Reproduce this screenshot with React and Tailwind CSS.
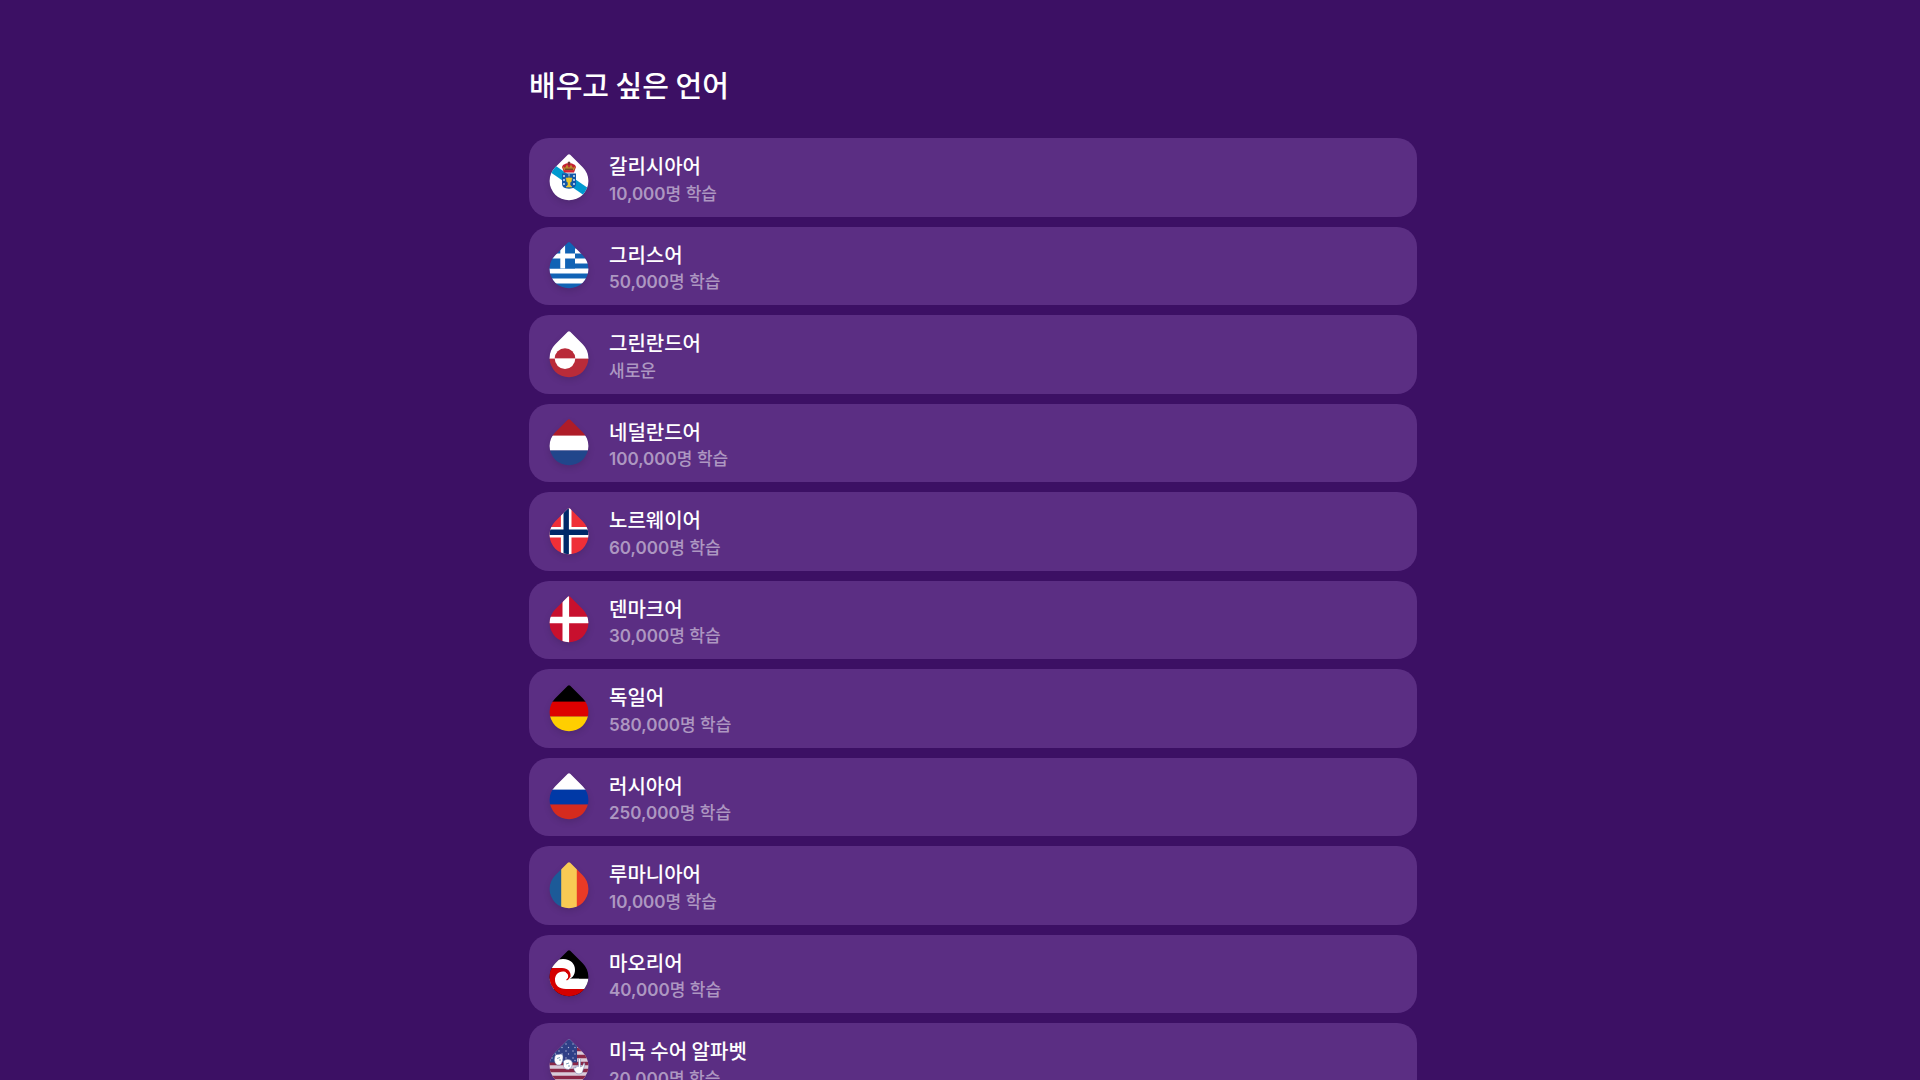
import React, { useId } from 'react';

const DROP = 'M18.8 .7Q20 -.4 21.2 .7L33.7 13.2A19.4 19.4 0 1 1 6.3 13.2Z';

const STARS = [0, 1, 2, 3, 4, 5, 6, 7, 8, 9, 10, 11];

function Galician() {
    return (
        <>
            <rect width="40" height="48" fill="#fff" />
            <path d="M-2 6L42 36V46L-2 16Z" fill="#0099cf" />
            <path d="M13 19.5H27V30Q27 34.5 20 34.7Q13 34.5 13 30Z" fill="#1257a8" />
            <path d="M14 11Q20 7 26 11L27 13L25 18.5H15L13 13Z" fill="#c41f31" />
            <path d="M13.5 12L16 14L18 10.5L20 14L22 10.5L24 14L26.5 12L25 16.5H15Z" fill="#b98a2c" />
            <path d="M16 15.2H24M20 7.5V11M18.7 8.7H21.3" stroke="#5b2a25" strokeWidth="1" />
            <path d="M15 17H25" stroke="#d92335" strokeWidth="1.6" />
            <path d="M17 24H23L22 28H21V31L23 33H17L19 31V28H18ZM20 22V24" fill="#e7c52d" stroke="#e7c52d" strokeWidth=".6" />
            <g fill="#cfe2f5">
                <circle cx="15" cy="22" r="1" />
                <circle cx="15" cy="26" r="1" />
                <circle cx="15" cy="30" r="1" />
                <circle cx="25" cy="22" r="1" />
                <circle cx="25" cy="26" r="1" />
                <circle cx="25" cy="30" r="1" />
                <circle cx="20" cy="21" r=".8" />
            </g>
        </>
    );
}

function Greek() {
    return (
        <>
            <rect width="40" height="48" fill="#1163b5" />
            <path d="M24 9H40M24 19H40M0 29H40M0 39H40" stroke="#fff" strokeWidth="5" />
            <rect width="26" height="26.5" fill="#1163b5" />
            <path d="M13.7 0V26.5M0 14H26" stroke="#fff" strokeWidth="4.8" />
        </>
    );
}

function Greenlandic() {
    return (
        <>
            <rect width="40" height="28" fill="#fff" />
            <rect y="27.6" width="40" height="21" fill="#b92b39" />
            <path d="M5.7 27.6A10.3 10.3 0 0 1 26.3 27.6Z" fill="#b92b39" />
            <path d="M5.7 27.6A10.3 10.3 0 0 0 26.3 27.6Z" fill="#fff" />
        </>
    );
}

function Tricolor({ colors }) {
    return (
        <>
            <rect width="40" height="17" fill={colors[0]} />
            <rect y="16.6" width="40" height="15" fill={colors[1]} />
            <rect y="31.5" width="40" height="17" fill={colors[2]} />
        </>
    );
}

function Norwegian() {
    return (
        <>
            <rect width="40" height="48" fill="#ef2f37" />
            <path d="M17.2 0V48M0 24.2H40" stroke="#fff" strokeWidth="10.6" />
            <path d="M17.2 0V48M0 24.2H40" stroke="#002868" strokeWidth="5.4" />
        </>
    );
}

function Danish() {
    return (
        <>
            <rect width="40" height="48" fill="#c8102e" />
            <path d="M16.8 0V48M0 24H40" stroke="#fff" strokeWidth="6.6" />
        </>
    );
}

function Romanian() {
    return (
        <>
            <rect width="13" height="48" fill="#1c5a98" />
            <rect x="12.2" width="16" height="48" fill="#f8ca54" />
            <rect x="27.8" width="13" height="48" fill="#e93a26" />
        </>
    );
}

function Maori() {
    return (
        <>
            <rect width="40" height="48" fill="#000" />
            <path d="M0 28.8H40V39H0Z" fill="#fff" />
            <path d="M0 18V48H40V39H20Q12 38 10 30Z" fill="#d40000" />
            <path d="M0 18C4 12 8 9 14 9C22 9 26 14 26 20C26 25 23 29 18 29.5L12 18Z" fill="#fff" />
            <path d="M0 18H13C19 18 22 22 21.5 26.5L18 31L2 37Z" fill="#d40000" />
            <path d="M18 30.5C21 28 20 22.5 15 21.5C9 21 6 25 6 30C6 35 10 39 17 39H30V28.8H20Z" fill="#fff" />
            <path d="M17.5 30C21 28.5 20.5 23.5 17 22" fill="none" stroke="#d40000" strokeWidth="1.2" />
        </>
    );
}

function Asl() {
    return (
        <>
            <rect width="40" height="48" fill="#d9cbd9" />
            <path d="M0 10.5H40M0 17.5H40M0 24.5H40M0 31.5H40M0 38.5H40M0 45.5H40" stroke="#8a2848" strokeWidth="3.6" />
            <rect width="28" height="23.5" fill="#2f3f86" />
            <g fill="#b5b9dc">
                {STARS.map((i) => (
                    <React.Fragment key={i}>
                        <circle cx={3 + (i % 4) * 7} cy={5 + Math.floor(i / 4) * 7} r=".7" />
                        <circle cx={6.5 + (i % 4) * 6.5} cy={8.5 + Math.floor(i / 4) * 6.5} r=".7" />
                    </React.Fragment>
                ))}
            </g>
            <g fill="#fff" stroke="#6a7ba8" strokeWidth=".5">
                <path d="M6 17Q7 15 9 15.5L12 15Q14.5 15.5 14 19L13.5 22Q12.5 25.5 11 26H8Q5.5 24 5.3 21Z" />
                <path d="M14.5 22Q17 19.5 20 20.5Q23.5 21 23.5 25Q23 29.5 19.5 30.5Q15 30.5 14.5 27.5Z" />
                <path d="M25 28L27 29V27L29.5 27.5V20Q30.5 18.5 31.5 20V28L33.5 27L35 23.5Q36 24 35.8 26L33 34Q30 35.5 27.5 34.5L25 31Z" />
            </g>
            <path d="M8 19.5L11 18.5M11 22V20M17 25L20 24M19 27H21" stroke="#5b8aa8" strokeWidth=".8" />
        </>
    );
}

const languages = [
    { name: '갈리시아어', count: '10,000', label: '명 학습', flag: <Galician /> },
    { name: '그리스어', count: '50,000', label: '명 학습', flag: <Greek /> },
    { name: '그린란드어', label: '새로운', flag: <Greenlandic /> },
    { name: '네덜란드어', count: '100,000', label: '명 학습', flag: <Tricolor colors={['#ae1c28', '#fff', '#21468b']} /> },
    { name: '노르웨이어', count: '60,000', label: '명 학습', flag: <Norwegian /> },
    { name: '덴마크어', count: '30,000', label: '명 학습', flag: <Danish /> },
    { name: '독일어', count: '580,000', label: '명 학습', flag: <Tricolor colors={['#000', '#dd0000', '#ffce00']} /> },
    { name: '러시아어', count: '250,000', label: '명 학습', flag: <Tricolor colors={['#fff', '#0039a6', '#d52b1e']} /> },
    { name: '루마니아어', count: '10,000', label: '명 학습', flag: <Romanian /> },
    { name: '마오리어', count: '40,000', label: '명 학습', flag: <Maori /> },
    { name: '미국 수어 알파벳', count: '20,000', label: '명 학습', flag: <Asl /> },
];

function FlagDrop({ children }) {
    const id = useId();

    return (
        <svg viewBox="0 2 40 48" className="w-10 h-12 shrink-0 overflow-visible drop-shadow-md" aria-hidden="true">
            <clipPath id={id}>
                <path d={DROP} />
            </clipPath>
            <g clipPath={`url(#${id})`}>{children}</g>
        </svg>
    );
}

function LanguageCard({ language }) {
    return (
        <li>
            <button
                type="button"
                className="flex w-full items-center gap-5 rounded-[20px] bg-[#5b2e83] px-5 pt-3.5 pb-[9px] text-left cursor-pointer"
            >
                <FlagDrop>{language.flag}</FlagDrop>
                <span className="flex flex-col gap-px">
                    <span className="text-xl leading-snug font-medium text-white">{language.name}</span>
                    <span className="font-[Inter,'Noto_Sans_CJK_KR',sans-serif] text-[17px] leading-[27px] font-medium text-[#ad97c1]">
                        {language.count && <span className="font-semibold">{language.count}</span>}
                        {language.label}
                    </span>
                </span>
            </button>
        </li>
    );
}

export default function App() {
    return (
        <div className="h-screen overflow-hidden bg-[#3c1064] pl-[26px] font-['Noto_Sans_CJK_KR',sans-serif]">
            <main className="mx-auto w-full max-w-[888px] pt-[63px]">
                <h1 className="mb-[33px] text-[29px] leading-[42px] font-medium text-white">배우고 싶은 언어</h1>
                <ul className="flex flex-col gap-2.5">
                    {languages.map((language) => (
                        <LanguageCard key={language.name} language={language} />
                    ))}
                </ul>
            </main>
        </div>
    );
}
